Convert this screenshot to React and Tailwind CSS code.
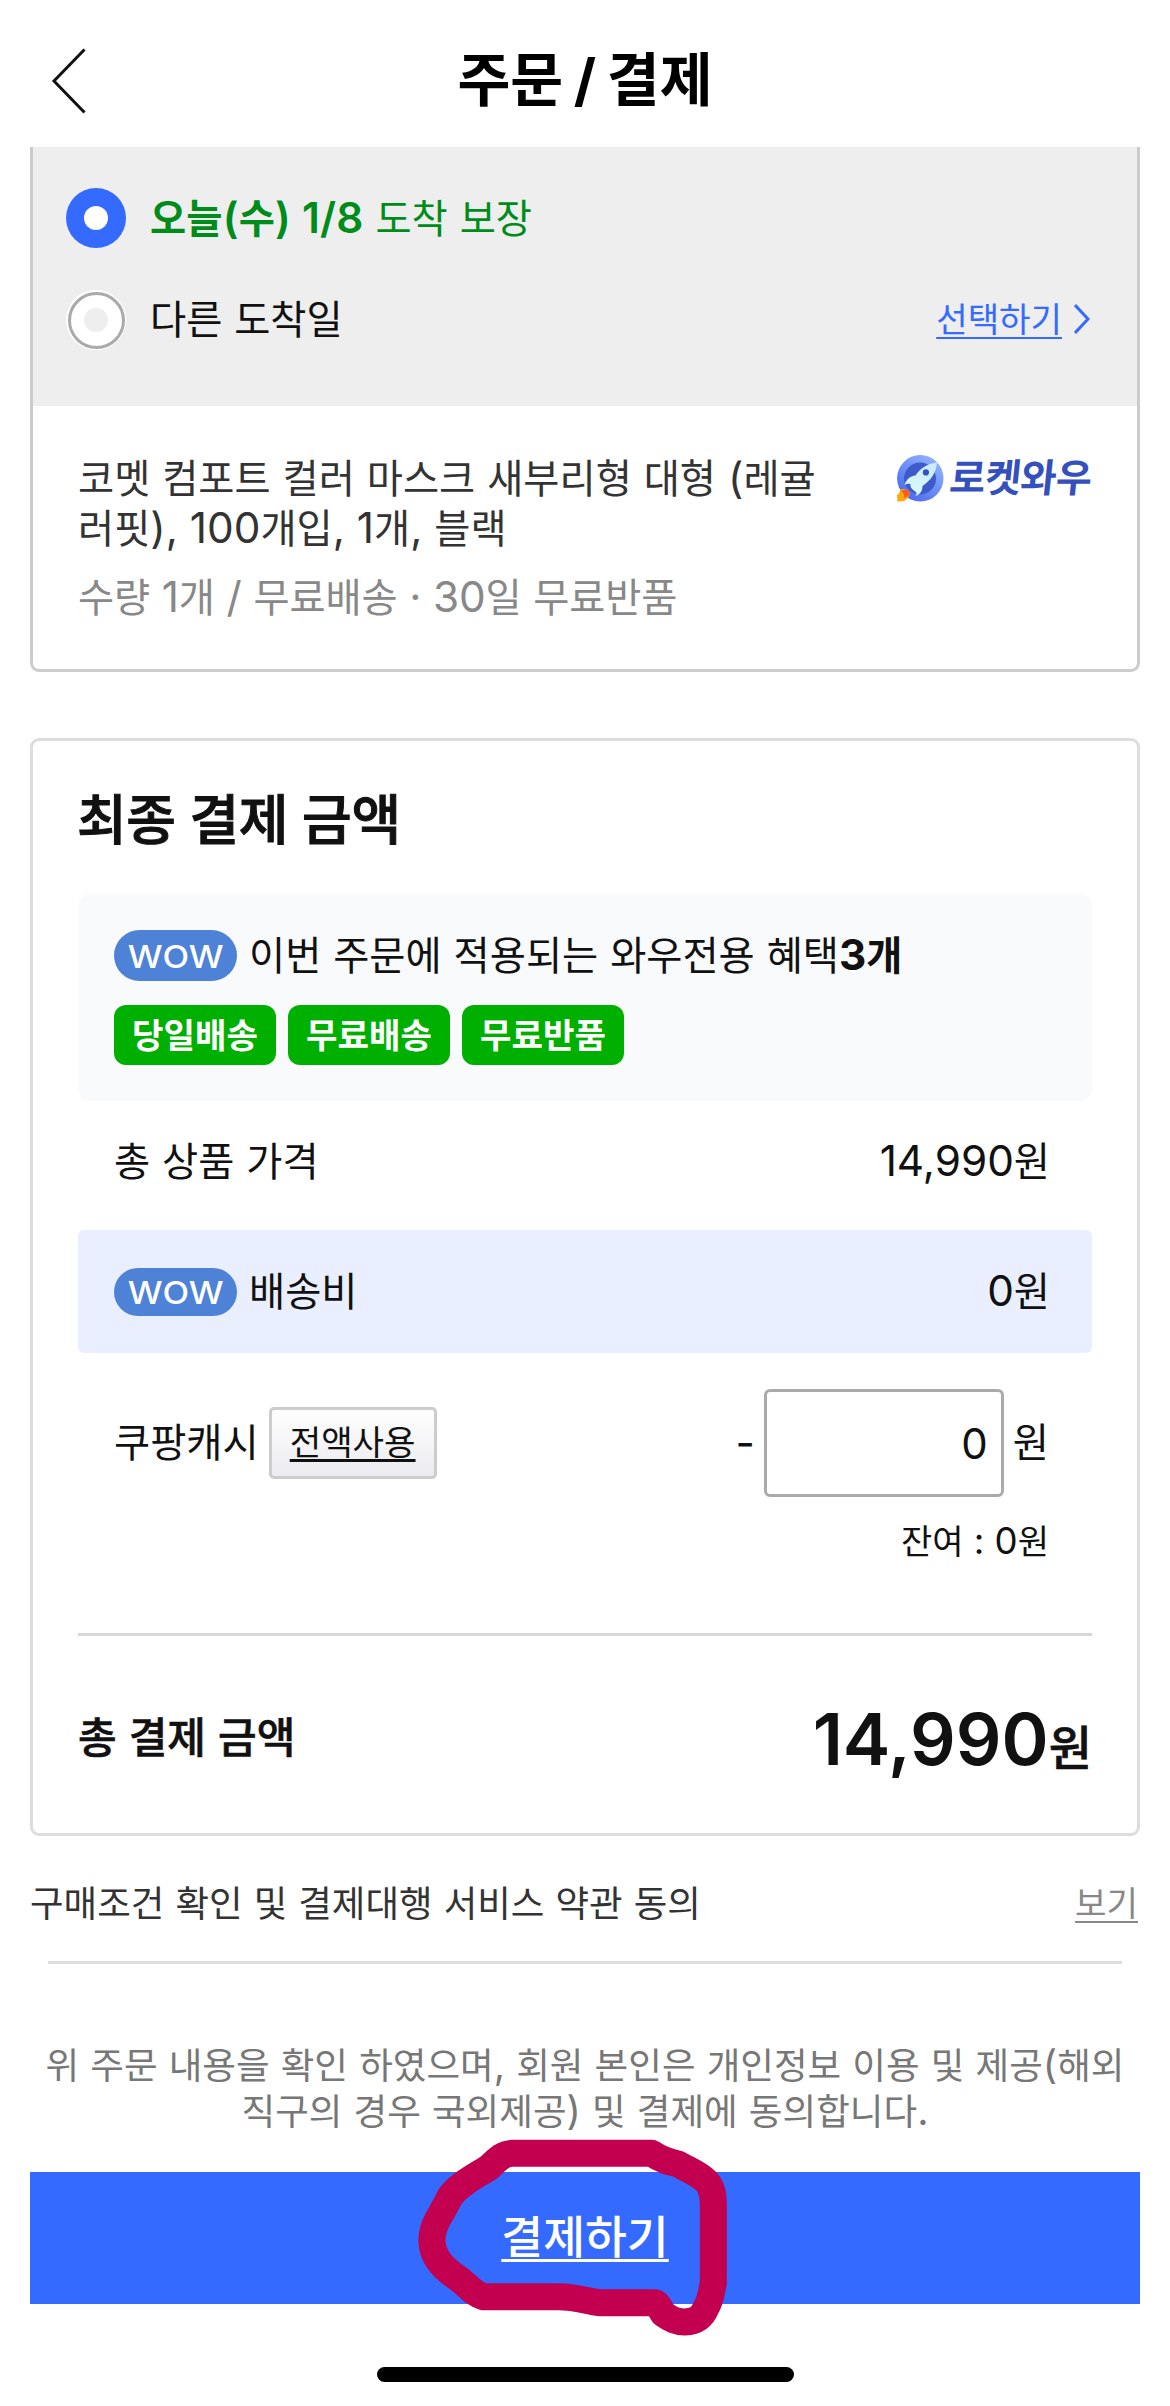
import clsx from 'clsx';

const benefits=['당일배송', '무료배송', '무료반품'];

// Latin letters, digits and spaces run a little larger than the Hangul beside them
const Ko=({children})=>(
  <>
    {children.split(/([^\uac00-\ud7a3]+)/).map((part, i)=>(
      i%2?<span key={i} className="text-[1.077em] leading-none">{part}</span>:part
    ))}
  </>
);

const Radio=({checked})=>(
  <span
    className={clsx(
      'flex size-[60px] shrink-0 items-center justify-center rounded-full',
      checked?'bg-[#346aff]':'bg-white'
    )}
  >
    {checked?(
      <span className="size-6 rounded-full bg-white"/>
    ):(
      <span className="flex size-[57px] items-center justify-center rounded-full border-[3px] border-[#aaa] bg-white">
        <span className="size-6 rounded-full bg-[#eee]"/>
      </span>
    )}
  </span>
);

const WowBadge=({className})=>(
  <span className={clsx('flex w-[123px] items-center justify-center rounded-full bg-[#4d82d6] text-[31px] font-medium leading-none text-white', className)}>
    <span className="scale-x-112 pt-0.5">WOW</span>
  </span>
);

const RocketIcon=()=>(
  <svg className="h-[47px] w-[47px] shrink-0" viewBox="0 0 47 47" fill="none">
    <defs>
      <linearGradient id="ring" x1="36" y1="4" x2="8" y2="42" gradientUnits="userSpaceOnUse">
        <stop stopColor="#8cb0ff"/>
        <stop offset="1" stopColor="#4c6bee"/>
      </linearGradient>
      <linearGradient id="body" x1="38" y1="8" x2="14" y2="38" gradientUnits="userSpaceOnUse">
        <stop stopColor="#c9e9fd"/>
        <stop offset="1" stopColor="#d9fbfa"/>
      </linearGradient>
    </defs>
    <circle cx="23.300" cy="23.300" r="23.200" fill="url(#ring)"/>
    <circle cx="23" cy="23.500" r="16" fill="#3f5acb"/>
    <path d="M40 7.500C32 8.500 24 12 18.500 20.500C14 20.500 9.500 24 7.500 30C9.500 28.500 11.500 28.500 13.500 29C13 31 14 34 17.500 36C20 37 20 39 18.500 41C23 39.500 25.500 36 25.500 31C34 25.500 39.500 17 40 7.500Z" fill="url(#body)"/>
    <circle cx="28.900" cy="17.400" r="3.100" fill="#3750bf"/>
    <path d="M3.500 34.500C6 33.500 10 34 12.500 37C13.500 41 10 45 5.500 46.500C4.500 46 2.500 46.500 0 46.500C1 44 0 42.500 0 40C2 39 2.500 37.500 3.500 34.500Z" fill="#ffa70a"/>
    <path d="M4 36C7 34 11 34.500 12.500 37C13 40 10 42.500 7 42.500C8 40 6.500 38 4 36Z" fill="#fb5a1b"/>
  </svg>
);

const Header=()=>(
  <header className="relative flex h-[147px] items-center justify-center pt-[14px]">
    <button className="absolute left-[49px] top-[46px]" aria-label="뒤로">
      <svg className="h-[70px] w-[40px]" viewBox="0 0 40 70" fill="none">
        <path d="M35.500 3.500L5 35L35.500 66.500" stroke="#111" strokeWidth="3"/>
      </svg>
    </button>
    <h1 className="text-[57.500px] font-bold leading-[67px] text-black [word-spacing:-3px]">주문 / 결제</h1>
  </header>
);

const DeliveryCard=()=>(
  <section className="mx-[30px] h-[525px] rounded-b-[9px] border-[3px] border-t-0 border-[#ccc]">
    <div className="h-[259px] bg-[#eee] pl-[33px] pr-[47px] pt-[41px] text-[39.300px]">
      <div className="flex h-[60px] items-center gap-6 text-[#008c1a]">
        <Radio checked/>
        <p className="whitespace-pre pt-px">
          <b className="font-semibold tracking-[0.2px]"><Ko>오늘(수) 1/8</Ko></b><Ko> 도착 보장</Ko>
        </p>
      </div>
      <div className="mt-[42px] flex h-[60px] items-center gap-6">
        <Radio/>
        <p><Ko>다른 도착일</Ko></p>
        <a className="ml-auto flex items-center gap-3 text-[34.200px] text-[#346aff]">
          <span className="underline decoration-2 underline-offset-[5px] [text-decoration-skip-ink:none]">선택하기</span>
          <svg className="mb-0.5 h-[30px] w-[16px]" viewBox="0 0 16 30" fill="none">
            <path d="M1 1L14 15L1 29" stroke="currentColor" strokeWidth="3"/>
          </svg>
        </a>
      </div>
    </div>
    <div className="flex items-start justify-between pl-[45px] pr-[45px] pt-[48px]">
      <div className="text-[39.300px] leading-[50px] text-[#333]">
        <p><Ko>코멧 컴포트 컬러 마스크 새부리형 대형 (레귤</Ko></p>
        <p><Ko>러핏), 100개입, 1개, 블랙</Ko></p>
        <p className="mt-[19px] tracking-[-0.15px] text-[#888]"><Ko>수량 1개 / 무료배송 · 30일 무료반품</Ko></p>
      </div>
      <div className="flex items-center gap-1.5">
        <RocketIcon/>
        <span className="-skew-x-6 text-[39px] font-bold leading-[48px] tracking-[-0.5px] text-[#3450bd]">로켓와우</span>
      </div>
    </div>
  </section>
);

const PaymentCard=()=>(
  <section className="mx-[30px] mt-[66px] h-[1098px] rounded-[9px] border-[3px] border-[#ddd] px-[45px] pt-[47px] text-[39.300px]">
    <h2 className="-ml-px text-[54px] font-medium leading-[66px] tracking-[-0.4px] [-webkit-text-stroke:1px_#111]">최종 결제 금액</h2>

    <div className="mt-[40px] h-[207px] rounded-xl bg-[#f9fafc] px-9 pt-9">
      <div className="flex h-[51px] items-center gap-3">
        <WowBadge className="h-[51px]"/>
        <p><Ko>이번 주문에 적용되는 와우전용 혜택</Ko><b className="font-bold"><Ko>3개</Ko></b></p>
      </div>
      <div className="mt-6 flex gap-3">
        {benefits.map((name)=>(
          <span key={name} className="flex h-[60px] w-[162px] items-center justify-center rounded-xl bg-[#00b000] pt-px text-[34.200px] font-bold text-white">
            {name}
          </span>
        ))}
      </div>
    </div>

    <div className="flex h-[129px] items-center justify-between pb-[7px] pl-9 pr-[42px]">
      <span><Ko>총 상품 가격</Ko></span>
      <span><Ko>14,990원</Ko></span>
    </div>

    <div className="flex h-[123px] items-center justify-between rounded-md bg-[#e9efff] pl-9 pr-[42px]">
      <div className="flex items-center gap-3">
        <WowBadge className="h-12"/>
        <span>배송비</span>
      </div>
      <span><Ko>0원</Ko></span>
    </div>

    <div className="mt-9 flex h-[108px] items-center pl-9 pr-[43px]">
      <span>쿠팡캐시</span>
      <button className="ml-2.5 flex h-[72px] w-[168px] items-center justify-center rounded-[5px] border-[3px] border-[#ccc] bg-linear-to-b from-white to-[#ebebf0] text-[34.200px] underline decoration-3 underline-offset-[4px] [text-decoration-skip-ink:none]">
        전액사용
      </button>
      <span className="ml-auto mr-[9px] text-[42px]">-</span>
      <input
        className="h-[108px] w-[240px] rounded-[6px] border-[3px] border-[#aaa] bg-white pr-[13px] text-right text-[42px] text-[#111]"
        defaultValue="0"
      />
      <span className="ml-[9px]">원</span>
    </div>
    <p className="mt-[22px] pr-[43px] text-right text-[34px] leading-[46px]"><Ko>잔여 : 0원</Ko></p>

    <div className="mt-[68px] flex h-[204px] items-center justify-between border-t-[3px] border-[#d8d8d8]">
      <span className="pt-[3px] text-[42px] font-medium [-webkit-text-stroke:0.6px_#111]"><Ko>총 결제 금액</Ko></span>
      <span className="pt-[14px] text-[71.500px] font-semibold leading-[80px]">
        14,990<span className="text-[47px] font-medium [-webkit-text-stroke:0.6px_#111]">원</span>
      </span>
    </div>
  </section>
);

// hand drawn marker ring round the pay button
const Marker=()=>(
  <svg className="pointer-events-none absolute left-[370px] top-[-52px] h-[230px] w-[350px]" viewBox="0 0 1050 690" fill="none">
    <path
      d="M475 100H755C785 120 805 127 835 132C865 150 895 160 920 185C937 203 940 225 940 262V490C932 520 935 535 918 563C905 595 885 605 855 606C825 605 815 598 790 582C775 555 770 548 765 548H600C560 545 535 530 475 530H250C215 520 200 490 160 465C125 440 97 405 96 365C95 310 125 285 150 230C180 190 225 170 270 140C295 115 310 100 340 100Z"
      stroke="#c3004f"
      strokeWidth="81"
      strokeLinecap="round"
      strokeLinejoin="round"
    />
  </svg>
);

export default function App() {
  return (
    <div className="h-[2406px] w-[1170px] overflow-hidden bg-white leading-[50px] text-[#111] font-['Inter','Noto_Sans_CJK_KR',sans-serif]">
      <Header/>
      <DeliveryCard/>
      <PaymentCard/>

      <div className="mx-[30px] mt-[43px] flex h-[50px] items-center justify-between text-[36.500px] text-[#333]">
        <p><Ko>구매조건 확인 및 결제대행 서비스 약관 동의</Ko></p>
        <a className="mr-0.5 text-[34.200px] text-[#888] underline decoration-2 underline-offset-[5px] [text-decoration-skip-ink:none]">보기</a>
      </div>
      <hr className="mx-12 mt-8 border-t-[3px] border-[#ddd]"/>

      <div className="mt-[79px] text-center text-[36.600px] leading-[46px] text-[#777]">
        <p><Ko>위 주문 내용을 확인 하였으며, 회원 본인은 개인정보 이용 및 제공(해외</Ko></p>
        <p><Ko>직구의 경우 국외제공) 및 결제에 동의합니다.</Ko></p>
      </div>

      <div className="relative mx-[30px] mt-[37px]">
        <button className="flex h-[132px] w-full items-center justify-center bg-[#346aff] text-[45.500px] font-medium text-white underline decoration-3 underline-offset-[5px] [text-decoration-skip-ink:none]">
          결제하기
        </button>
        <Marker/>
      </div>

      <div className="mx-auto mt-[63px] h-[15px] w-[417px] rounded-full bg-black"/>
    </div>
  );
}
